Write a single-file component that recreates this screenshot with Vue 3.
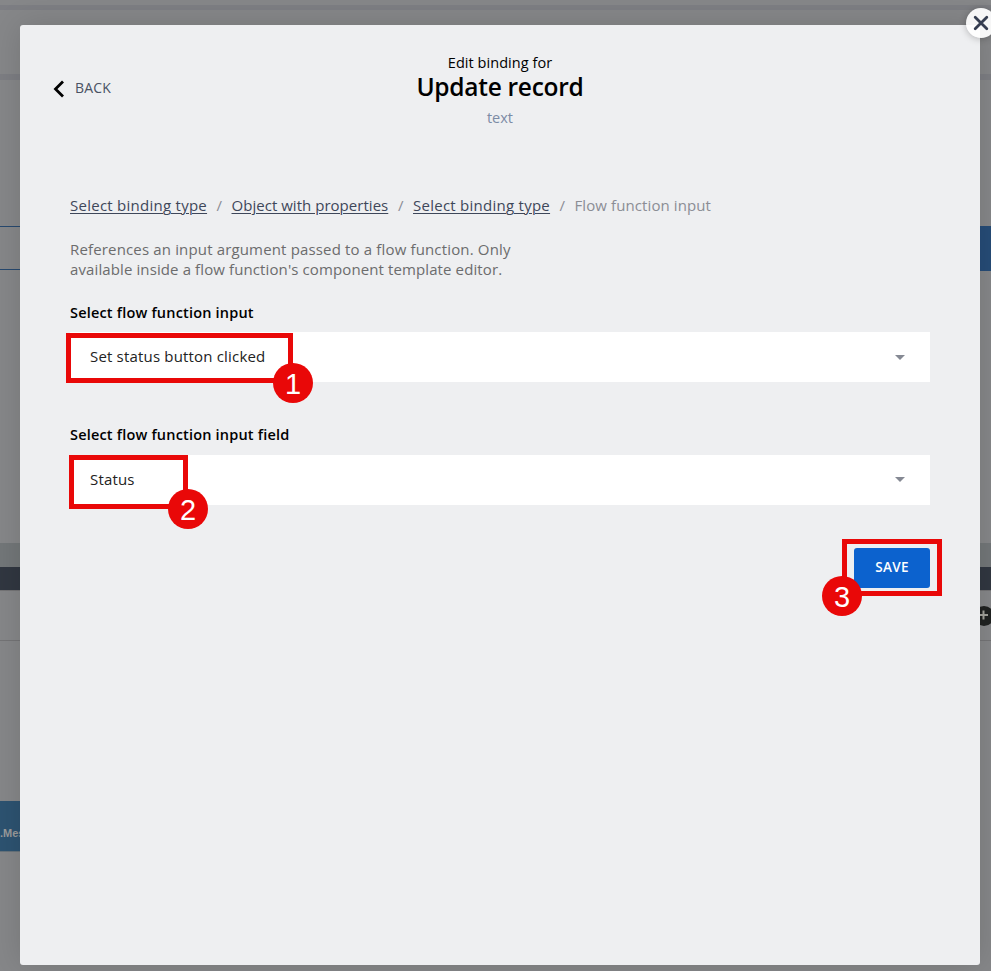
<script setup>
const crumbs = [
  { label: 'Select binding type', cls: 'c1' },
  { label: 'Object with properties', cls: 'c2' },
  { label: 'Select binding type', cls: 'c1' },
]
</script>

<template>
  <div class="page">
    <div class="backdrop">
      <div class="gap-top"></div>
      <div class="band band-a"></div>
      <div class="gap-header"></div>
      <div class="band band-b"></div>
      <div class="gap-toolbar"></div>
      <div class="toolbar">
        <div class="outlined"></div>
        <div class="filled"></div>
      </div>
      <div class="gap-main"></div>
      <div class="strip-light"></div>
      <div class="strip-dark"></div>
      <div class="row-add">
        <svg class="add" width="20" height="20" viewBox="0 0 20 20">
          <circle cx="10" cy="10" r="10" fill="#202221" />
          <path d="M5 9H14M9.500 4.500V13.500" stroke="#a2a29b" stroke-width="2" />
        </svg>
      </div>
      <div class="gap-rows"></div>
      <div class="node"><span>.Message</span></div>
    </div>

    <section class="modal">
      <header class="head">
        <button class="back">
          <svg width="12" height="18" viewBox="0 0 12 18">
            <path d="M10 1.500L2.500 9L10 16.500" fill="none" stroke="#000" stroke-width="2.800" />
          </svg>
          <span class="back-text">BACK</span>
        </button>
        <div class="titles">
          <span class="over">Edit binding for</span>
          <h1>Update record</h1>
          <span class="kind">text</span>
        </div>
      </header>

      <nav class="crumbs">
        <template v-for="(c, i) in crumbs" :key="i">
          <a :class="c.cls">{{ c.label }}</a>
          <span class="sep">/</span>
        </template>
        <span class="current">Flow function input</span>
      </nav>

      <p class="desc">
        <span class="d1">References an input argument passed to a flow function. Only</span><br />
        <span class="d2">available inside a flow function's component template editor.</span>
      </p>

      <label class="l1"><span>Select flow function input</span></label>
      <div class="select">
        <span class="v1">Set status button clicked</span>
        <i class="caret"></i>
      </div>
      <label class="l2"><span>Select flow function input field</span></label>
      <div class="select">
        <span class="v2">Status</span>
        <i class="caret caret-2"></i>
      </div>
      <div class="actions">
        <button class="save"><span>SAVE</span></button>
      </div>
    </section>

    <button class="close">
      <svg width="16" height="16" viewBox="0 0 16 16">
        <path d="M2.200 2.200L13.800 13.800M13.800 2.200L2.200 13.800" stroke="#353d50" stroke-width="2.800" stroke-linecap="round" />
      </svg>
    </button>

    <div class="mark m1"><b>1</b></div>
    <div class="mark m2"><b>2</b></div>
    <div class="mark m3"><b>3</b></div>
  </div>
</template>

<style>
body { margin: 0; }
</style>

<style scoped>
* { box-sizing: border-box; }
button { border: 0; padding: 0; font: inherit; }
.page {
  position: relative;
  width: 991px;
  height: 971px;
  overflow: hidden;
  background: #868789;
  font-family: "Open Sans", "Noto Sans", sans-serif;
  font-size: 15px;
  color: #000;
}
.backdrop { display: flex; flex-direction: column; }
.gap-top { height: 5px; }
.band { background: #7d7e83; }
.band-a { height: 5px; }
.gap-header { height: 64px; }
.band-b { height: 6px; }
.gap-toolbar { height: 146px; }
.toolbar { display: flex; justify-content: space-between; height: 45px; }
.outlined { width: 200px; height: 44px; border: solid #27496f; border-width: 1px 0; }
.filled { width: 100px; background: #264c77; }
.gap-main { height: 272px; }
.strip-light { height: 24px; background: #737779; }
.strip-dark { height: 23px; background: #313741; }
.row-add {
  display: flex;
  justify-content: flex-end;
  align-items: center;
  height: 51px;
  border: solid #747476;
  border-width: 1px 0;
}
.add { margin-right: -3px; }
.gap-rows { height: 160px; }
.node {
  width: 200px;
  height: 51px;
  padding-top: 24px;
  background: #2d5371;
  border: solid #68737b;
  border-width: 0 0 1px;
  color: #9a9b9b;
  font: bold 11px/16px "Liberation Sans", sans-serif;
}
.modal {
  position: absolute;
  left: 20px;
  top: 25px;
  width: 960px;
  height: 940px;
  padding: 0 50px;
  border-radius: 3px;
  background: #eeeff1;
  box-shadow: 0 0 32px rgba(0, 0, 0, 0.14);
}
.head {
  display: grid;
  grid-template-columns: 1fr 400px 1fr;
  height: 170px;
  padding-top: 27px;
}
.back {
  display: flex;
  align-items: center;
  gap: 10px;
  height: 20px;
  margin: 25px 0 0 -17px;
  background: none;
  color: #4a5263;
  font-size: 14px;
  letter-spacing: 0.2px;
}
.back svg { margin-top: 4px; }
.titles { display: flex; flex-direction: column; align-items: center; }
.over { line-height: 21px; font-size: 14.500px; letter-spacing: 0.05px; }
h1 { margin: 0; line-height: 27px; font-size: 24.500px; font-weight: 600; letter-spacing: -0.28px; }
.kind { margin-top: 8px; line-height: 20px; font-size: 14.500px; color: #7c8ba5; }
.crumbs {
  display: flex;
  height: 20px;
  line-height: 20px;
  color: #8b8d95;
  white-space: nowrap;
}
.crumbs a {
  color: #3e475a;
  text-decoration: underline;
  text-decoration-thickness: 1px;
  text-underline-offset: 2px;
  text-decoration-skip-ink: auto;
}
.c1 { width: 137px; letter-spacing: 0.26px; }
.c2 { width: 157px; letter-spacing: 0.03px; }
.current { letter-spacing: 0.1px; }
.sep { width: 24.500px; text-align: center; }
.desc { margin: 24px 0 0; line-height: 20px; color: #6c6c6d; white-space: nowrap; }
.d1 { letter-spacing: 0.155px; }
.d2 { letter-spacing: 0.11px; }
label { display: block; line-height: 20px; font-size: 14.500px; font-weight: 600; letter-spacing: 0.19px; }
.l1 { margin-top: 24px; margin-bottom: 9px; }
.l2 { margin-top: 43px; margin-bottom: 10px; }
.select {
  display: flex;
  align-items: center;
  justify-content: space-between;
  height: 50px;
  padding: 0 25px 0 20px;
  background: #fff;
  color: #222;
}
.v1, .v2 { margin-top: -2px; letter-spacing: 0.18px; }
.caret { border: solid transparent; border-width: 5px 5px 0; border-top-color: #858993; }
.caret-2 { margin-top: -2px; }
.actions { display: flex; justify-content: flex-end; padding-top: 43px; }
.save {
  width: 76px;
  height: 40px;
  padding-bottom: 2px;
  border-radius: 3px;
  background: #0c62ce;
  color: #fff;
  font-size: 13.500px;
  font-weight: 600;
  letter-spacing: 0.3px;
}
.close {
  position: absolute;
  left: 965.500px;
  top: 8px;
  display: flex;
  align-items: center;
  justify-content: center;
  width: 30px;
  height: 30px;
  border-radius: 50%;
  background: rgba(255, 255, 255, 0.93);
  box-shadow: 0 1px 7px rgba(0, 0, 0, 0.25);
}
.mark { position: absolute; border: 5px solid #e90808; }
.mark b {
  position: absolute;
  width: 40px;
  height: 40px;
  border-radius: 50%;
  background: #e90808;
  color: #fff;
  font: 29px/43px "Liberation Sans", Arial, sans-serif;
  text-align: center;
}
.m1 { left: 66px; top: 333px; width: 227px; height: 50px; }
.m2 { left: 69px; top: 455px; width: 119px; height: 54px; }
.m3 { left: 842px; top: 539px; width: 100px; height: 57px; }
.m1 b, .m2 b { right: -25px; bottom: -25px; }
.m3 b { left: -25px; bottom: -25px; }
</style>
